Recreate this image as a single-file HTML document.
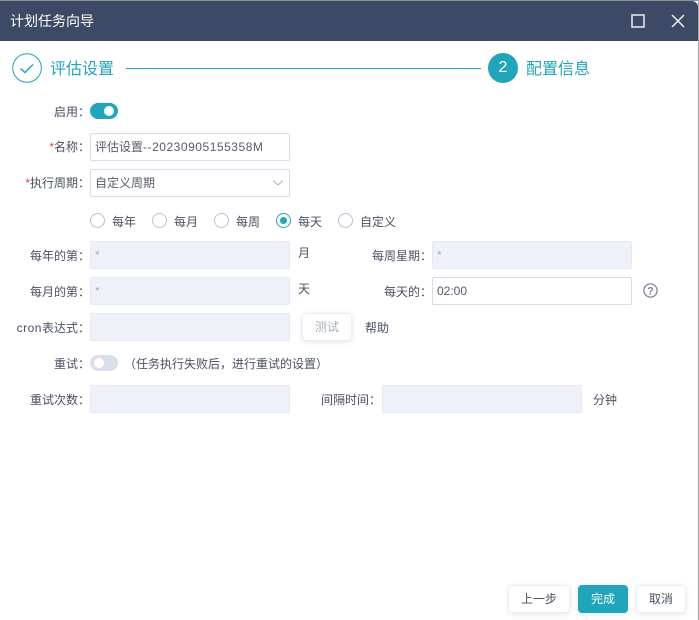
<!DOCTYPE html>
<html lang="zh"><head><meta charset="utf-8">
<style>
*{box-sizing:border-box;margin:0;padding:0}
html,body{width:699px;height:620px;overflow:hidden;background:#fff;font-family:"Liberation Sans","Noto Sans CJK SC",sans-serif;font-size:12px;color:#4a5064}
.a{position:absolute;white-space:nowrap}
#top{left:0;top:0;width:699px;height:1px;background:#8f8f8f}
#right{left:698px;top:0;width:1px;height:620px;background:#a8a8a8}
#head{left:0;top:1px;width:698px;height:40px;background:#3c4a66;border-top-right-radius:6px;color:#fff;font-size:14px;line-height:40px;padding-left:10px}
.lb{right:609px;text-align:right;line-height:18px;height:18px;color:#4a5064}
.lb2{text-align:right;line-height:18px;height:18px}
.in{width:200px;height:28px;border:1px solid #d8dcea;border-radius:2px;background:#fff;line-height:26px;padding-left:4px;color:#555b6e;font-size:12px}
.dis{background:#eef1f8;border-color:#e6e9f4;color:#a9aebf}
.r{width:15px;height:15px;border:1px solid #bcc0d2;border-radius:50%;background:#fff}
.t{line-height:18px;height:18px}
.btn{border-radius:4px;text-align:center;background:#fff;box-shadow:0 1px 5px rgba(90,110,170,.18);border:1px solid #eceef5;color:#4a5064}
s{color:#f03a3a;text-decoration:none}
</style></head><body>
<div class="a" id="top"></div>
<div class="a" id="head">计划任务向导</div>
<div class="a" id="right"></div>
<svg class="a" style="left:630px;top:13px" width="16" height="16" viewBox="0 0 16 16"><rect x="2" y="2" width="12" height="12" fill="none" stroke="#dfe3ec" stroke-width="1.6"/></svg>
<svg class="a" style="left:670px;top:13px" width="16" height="16" viewBox="0 0 16 16"><path d="M2 2 L14 14 M14 2 L2 14" fill="none" stroke="#eef0f5" stroke-width="1.5"/></svg>

<svg class="a" style="left:12px;top:53px" width="30" height="30" viewBox="0 0 30 30"><circle cx="15" cy="15" r="14.3" fill="none" stroke="#20a5ba" stroke-width="1"/><path d="M8.5 15.5 L13 19.5 L21 11.5" fill="none" stroke="#20a5ba" stroke-width="1.5"/></svg>
<div class="a" style="left:50px;top:59px;font-size:16px;line-height:22px;color:#20a5ba">评估设置</div>
<div class="a" style="left:126px;top:68px;width:355px;height:1px;background:#20a5ba"></div>
<div class="a" style="left:488px;top:53px;width:30px;height:30px;border-radius:50%;background:#20a5ba;color:#fff;font-size:16px;line-height:30px;text-align:center">2</div>
<div class="a" style="left:526px;top:59px;font-size:16px;line-height:22px;color:#20a5ba">配置信息</div>

<div class="a lb" style="top:103px">启用：</div>
<div class="a" style="left:90px;top:103px;width:28px;height:16px;border-radius:8px;background:#20a5ba"></div>
<div class="a" style="left:104px;top:106px;width:10px;height:10px;border-radius:50%;background:#fff"></div>

<div class="a lb" style="top:138px"><s>*</s>名称：</div>
<div class="a in" style="left:90px;top:133px">评估设置<span style="letter-spacing:.53px">--20230905155358M</span></div>

<div class="a lb" style="top:174px"><s>*</s>执行周期：</div>
<div class="a in" style="left:90px;top:169px">自定义周期</div>
<svg class="a" style="left:272px;top:179px" width="12" height="8" viewBox="0 0 12 8"><path d="M1 1.5 L6 6 L11 1.5" fill="none" stroke="#a9aebf" stroke-width="1"/></svg>

<div class="a r" style="left:90px;top:213px"></div><div class="a t" style="left:112px;top:213px">每年</div>
<div class="a r" style="left:152px;top:213px"></div><div class="a t" style="left:174px;top:213px">每月</div>
<div class="a r" style="left:214px;top:213px"></div><div class="a t" style="left:236px;top:213px">每周</div>
<div class="a r" style="left:276px;top:213px;border-color:#20a5ba"></div><div class="a" style="left:280px;top:217px;width:7px;height:7px;border-radius:50%;background:#20a5ba"></div><div class="a t" style="left:298px;top:213px">每天</div>
<div class="a r" style="left:338px;top:213px"></div><div class="a t" style="left:360px;top:213px">自定义</div>

<div class="a lb" style="top:247px">每年的第：</div>
<div class="a in dis" style="left:90px;top:241px">*</div>
<div class="a t" style="left:298px;top:244px">月</div>
<div class="a lb2" style="right:267px;top:247px">每周星期：</div>
<div class="a in dis" style="left:432px;top:241px">*</div>

<div class="a lb" style="top:283px">每月的第：</div>
<div class="a in dis" style="left:90px;top:277px">*</div>
<div class="a t" style="left:298px;top:280px">天</div>
<div class="a lb2" style="right:267px;top:283px">每天的：</div>
<div class="a in" style="left:432px;top:277px">02:00</div>
<svg class="a" style="left:643px;top:283px" width="15" height="15" viewBox="0 0 15 15"><circle cx="7.5" cy="7.5" r="6.6" fill="none" stroke="#7d8499" stroke-width="1.3"/><text x="7.5" y="11.5" text-anchor="middle" font-size="11" font-weight="bold" fill="#7d8499" font-family="Liberation Sans">?</text></svg>

<div class="a lb" style="top:319px"><span style="letter-spacing:.5px">cron</span>表达式：</div>
<div class="a in dis" style="left:90px;top:313px"></div>
<div class="a btn" style="left:302px;top:313px;width:50px;height:28px;line-height:26px;color:#a9aebf">测试</div>
<div class="a t" style="left:365px;top:319px">帮助</div>

<div class="a lb" style="top:355px">重试：</div>
<div class="a" style="left:90px;top:355px;width:28px;height:16px;border-radius:8px;background:#dadfee"></div>
<div class="a" style="left:94px;top:358px;width:10px;height:10px;border-radius:50%;background:#fff"></div>
<div class="a t" style="left:124px;top:355px">（任务执行失败后，进行重试的设置）</div>

<div class="a lb" style="top:391px">重试次数：</div>
<div class="a in dis" style="left:90px;top:385px"></div>
<div class="a lb2" style="right:318px;top:391px">间隔时间：</div>
<div class="a in dis" style="left:382px;top:385px"></div>
<div class="a t" style="left:593px;top:391px">分钟</div>

<div class="a btn" style="left:508px;top:585px;width:62px;height:28px;line-height:26px">上一步</div>
<div class="a btn" style="left:578px;top:585px;width:50px;height:28px;line-height:26px;background:#20a5ba;border-color:#20a5ba;color:#fff">完成</div>
<div class="a btn" style="left:636px;top:585px;width:50px;height:28px;line-height:26px">取消</div>
</body></html>
